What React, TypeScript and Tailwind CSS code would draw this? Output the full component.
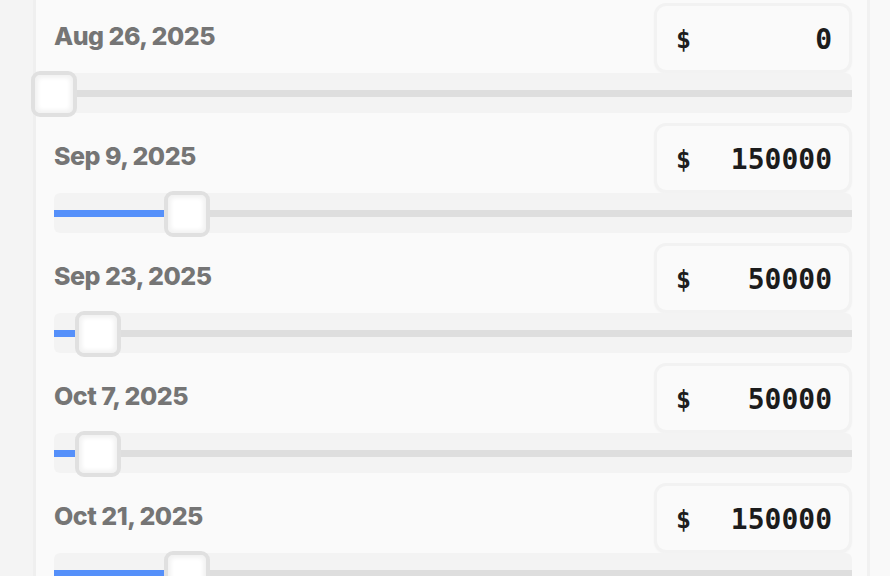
import React from "react";

const rows = [
  { date: "Aug 26, 2025", value: 0 },
  { date: "Sep 9, 2025", value: 150000 },
  { date: "Sep 23, 2025", value: 50000 },
  { date: "Oct 7, 2025", value: 50000 },
  { date: "Oct 21, 2025", value: 150000 },
];

const MAX = 900000;

function Row({ date, value }: { date: string; value: number }) {
  const pct = (value / MAX) * 100;
  return (
    <div className="flex flex-col mb-[10px]">
      <div className="flex items-center justify-between h-[70px]">
        <div
          className="text-[25px] font-extrabold text-[#757575] tracking-[-0.02em] leading-none pb-[4px]"
          style={{ fontFamily: "Inter, 'Liberation Sans', sans-serif" }}
        >
          {date}
        </div>
        <div className="w-[198px] h-[70px] rounded-[12px] border-[3px] border-[#f2f2f2] bg-[#fafafa] flex items-center justify-between pl-[19px] pr-[17px] pt-[3px] shadow-[0_1px_2px_rgba(0,0,0,0.03)]">
          <span
            className="text-[25px] font-bold text-[#1f1f1f]"
            style={{ fontFamily: "'DejaVu Sans Mono', monospace" }}
          >
            $
          </span>
          <span
            className="text-[28px] font-bold text-[#1c1c1c]"
            style={{ fontFamily: "'DejaVu Sans Mono', monospace" }}
          >
            {value}
          </span>
        </div>
      </div>
      <div className="relative h-[40px] rounded-[6px] bg-[#f3f3f3]">
        <div className="absolute left-0 right-0 top-[17px] h-[7px] bg-[#dedede]" />
        <div
          className="absolute left-0 top-[17px] h-[7px] bg-[#5590fa]"
          style={{ width: `${pct}%` }}
        />
        <div
          className="absolute top-[-2px] w-[46px] h-[46px] -ml-[23px] rounded-[9px] border-[4px] border-[#e0e0e0] bg-white shadow-[inset_0_0_4px_3px_#f2f2f2]"
          style={{ left: `${pct}%` }}
        />
      </div>
    </div>
  );
}

export default function App() {
  return (
    <div className="w-[890px] h-[576px] overflow-hidden flex bg-[#f8f8f8]">
      <div className="w-[33px] shrink-0 bg-[#f4f4f4]" />
      <div className="w-[837px] shrink-0 bg-[#fafafa] border-l-[3px] border-l-[#efefef] border-r-[3px] border-r-[#f1f1f1] pl-[18px] pr-[15px] pt-[3px]">
        {rows.map((r, i) => (
          <Row key={i} date={r.date} value={r.value} />
        ))}
      </div>
      <div className="flex-1 bg-[#f9f9f9]" />
    </div>
  );
}
